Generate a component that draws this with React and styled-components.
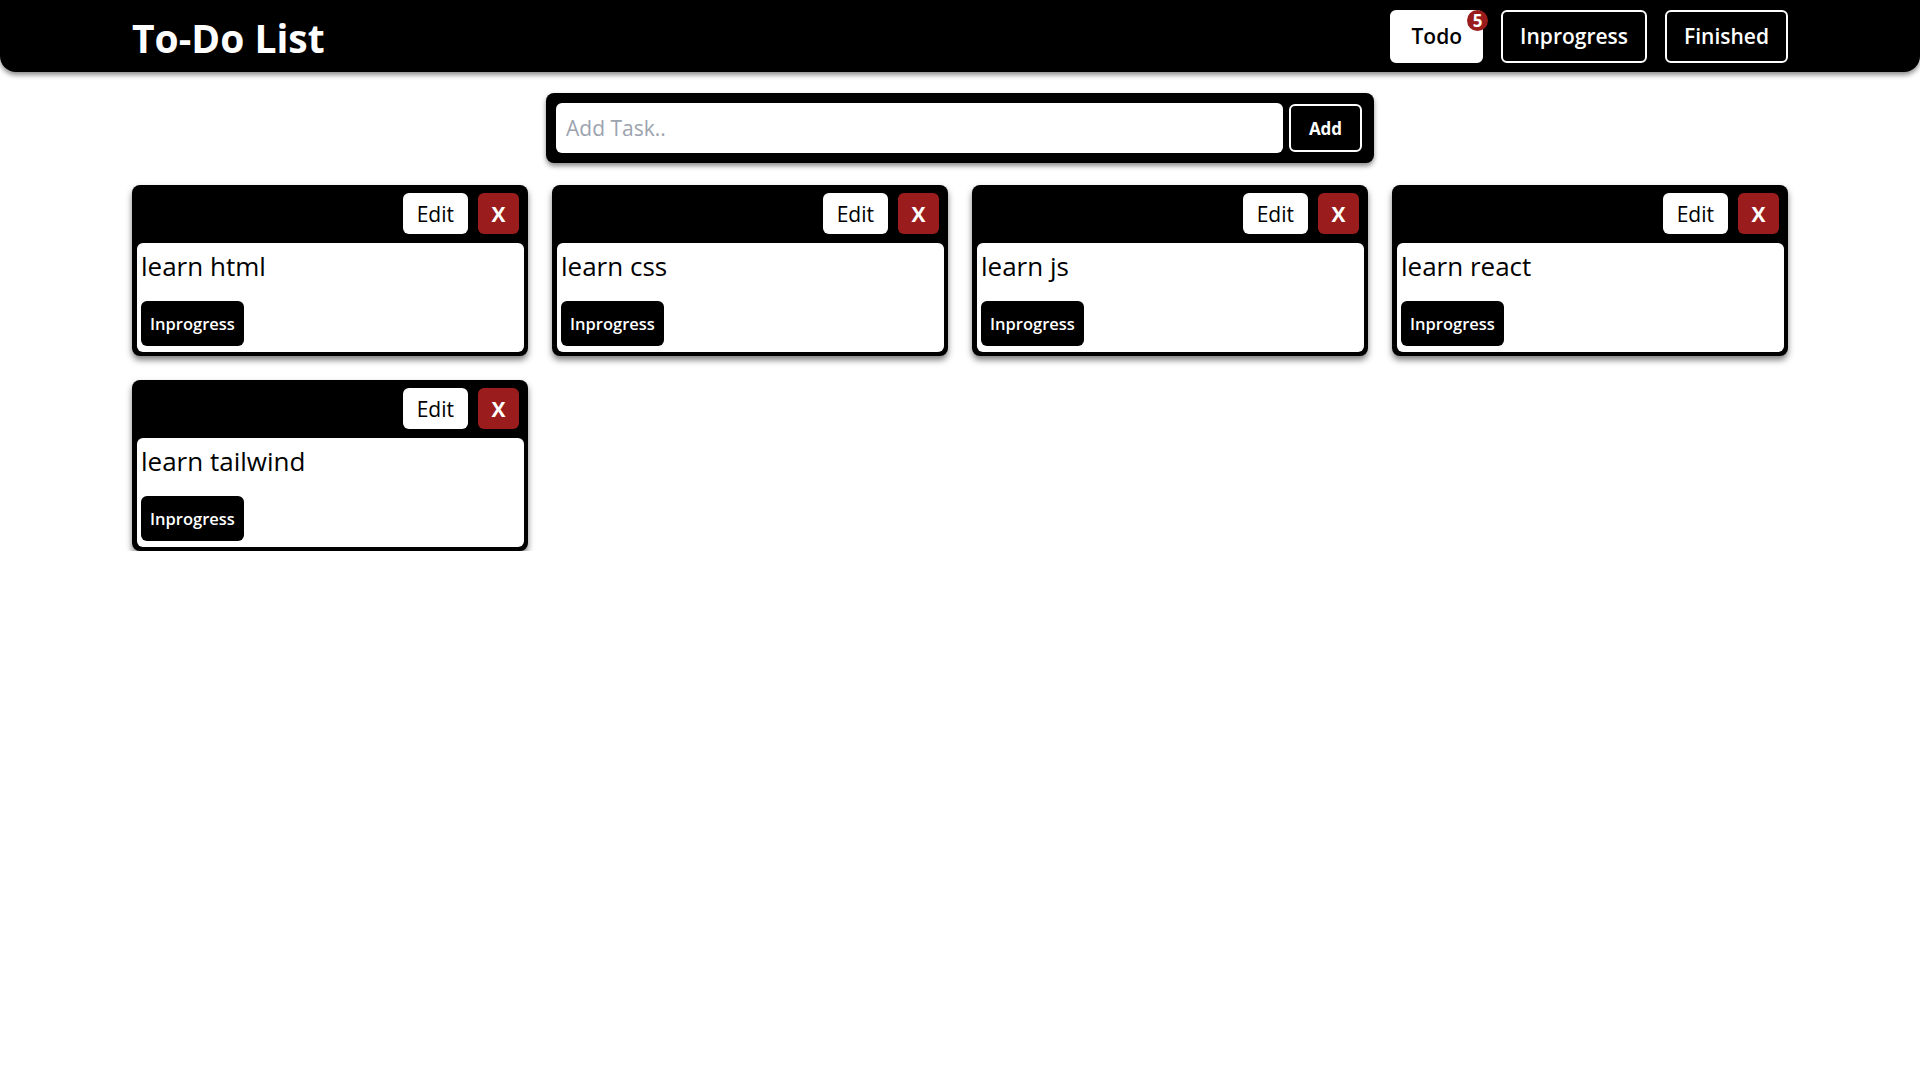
import React from "react";
import styled, { createGlobalStyle } from "styled-components";

const GlobalStyle = createGlobalStyle`
  * { box-sizing: border-box; }
  body {
    margin: 0;
    background: #ffffff;
    font-family: "Open Sans", "Noto Sans", "Liberation Sans", sans-serif;
    color: #000;
  }
`;

const Header = styled.header`
  height: 72px;
  background: #000;
  border-radius: 0 0 16px 16px;
  box-shadow: 0 3px 5px rgba(0, 0, 0, 0.45);
  display: flex;
  align-items: center;
  justify-content: space-between;
  padding: 0 132px;
`;

const Title = styled.h1`
  margin: 0;
  color: #fff;
  font-size: 39px;
  font-weight: 700;
  padding-top: 2px;
`;

const Nav = styled.nav`
  display: flex;
  gap: 18px;
  align-items: center;
`;

const NavButton = styled.button`
  position: relative;
  height: 53px;
  padding: 0 ${(p) => (p.$active ? "19px" : "17px")};
  border-radius: 6px;
  font-family: inherit;
  font-size: 21px;
  font-weight: 600;
  cursor: pointer;
  background: ${(p) => (p.$active ? "#fff" : "#000")};
  color: ${(p) => (p.$active ? "#000" : "#fff")};
  border: 2px solid #fff;
`;

const Badge = styled.span`
  position: absolute;
  top: -2px;
  right: -7px;
  width: 21px;
  height: 21px;
  border-radius: 50%;
  background: #991b1b;
  color: #fff;
  font-size: 17px;
  font-weight: 700;
  line-height: 21px;
  text-align: center;
`;

const Main = styled.main`
  padding: 21px 132px 0;
  display: flex;
  flex-direction: column;
  align-items: center;
  gap: 22px;
`;

const AddBar = styled.form`
  width: 828px;
  background: #000;
  border-radius: 8px;
  padding: 10px 12px 10px 10px;
  display: flex;
  align-items: center;
  gap: 6px;
  box-shadow: 0 3px 5px rgba(0, 0, 0, 0.45);
`;

const TaskInput = styled.input`
  flex: 1;
  height: 50px;
  border: none;
  outline: none;
  border-radius: 6px;
  padding: 0 10px;
  font-family: inherit;
  font-size: 21px;
  color: #000;
  &::placeholder {
    color: #9ca3af;
  }
`;

const AddButton = styled.button`
  width: 73px;
  height: 48px;
  background: #000;
  color: #fff;
  border: 2px solid #fff;
  border-radius: 6px;
  font-family: inherit;
  font-size: 17px;
  font-weight: 700;
  cursor: pointer;
`;

const Grid = styled.div`
  width: 100%;
  display: grid;
  grid-template-columns: repeat(4, 1fr);
  gap: 24px;
`;

const Card = styled.div`
  background: #000;
  border-radius: 8px;
  padding: 0 4px 4px 5px;
  box-shadow: 0 4px 6px rgba(0, 0, 0, 0.5);
`;

const CardHead = styled.div`
  height: 58px;
  display: flex;
  align-items: flex-start;
  justify-content: flex-end;
  gap: 10px;
  padding: 8px 5px 0 0;
`;

const CardButton = styled.button`
  height: 41px;
  padding: 0 ${(p) => (p.$danger ? "0" : "14px")};
  width: ${(p) => (p.$danger ? "41px" : "auto")};
  border: none;
  border-radius: 6px;
  background: ${(p) => (p.$danger ? "#9b1c1c" : "#fff")};
  color: ${(p) => (p.$danger ? "#fff" : "#000")};
  font-family: inherit;
  font-size: 21px;
  font-weight: ${(p) => (p.$danger ? 700 : 400)};
  cursor: pointer;
`;

const CardBody = styled.div`
  background: #fff;
  border-radius: 6px;
  padding: 4px 4px 6px 4px;
  display: flex;
  flex-direction: column;
  align-items: flex-start;
  gap: 17px;
`;

const TaskText = styled.p`
  margin: 0;
  font-size: 26px;
  line-height: 36px;
  padding-top: 1px;
`;

const StatusButton = styled.button`
  height: 45px;
  padding: 0 9px;
  border: none;
  border-radius: 6px;
  background: #000;
  color: #fff;
  font-family: inherit;
  font-size: 16.5px;
  font-weight: 600;
  cursor: pointer;
`;

const tasks = ["learn html", "learn css", "learn js", "learn react", "learn tailwind"];

export default function App() {
  return (
    <>
      <GlobalStyle />
      <Header>
        <Title>To-Do List</Title>
        <Nav>
          <NavButton $active>
            Todo
            <Badge>5</Badge>
          </NavButton>
          <NavButton>Inprogress</NavButton>
          <NavButton>Finished</NavButton>
        </Nav>
      </Header>
      <Main>
        <AddBar onSubmit={(e) => e.preventDefault()}>
          <TaskInput placeholder="Add Task.." />
          <AddButton type="submit">Add</AddButton>
        </AddBar>
        <Grid>
          {tasks.map((t) => (
            <Card key={t}>
              <CardHead>
                <CardButton>Edit</CardButton>
                <CardButton $danger>X</CardButton>
              </CardHead>
              <CardBody>
                <TaskText>{t}</TaskText>
                <StatusButton>Inprogress</StatusButton>
              </CardBody>
            </Card>
          ))}
        </Grid>
      </Main>
    </>
  );
}
